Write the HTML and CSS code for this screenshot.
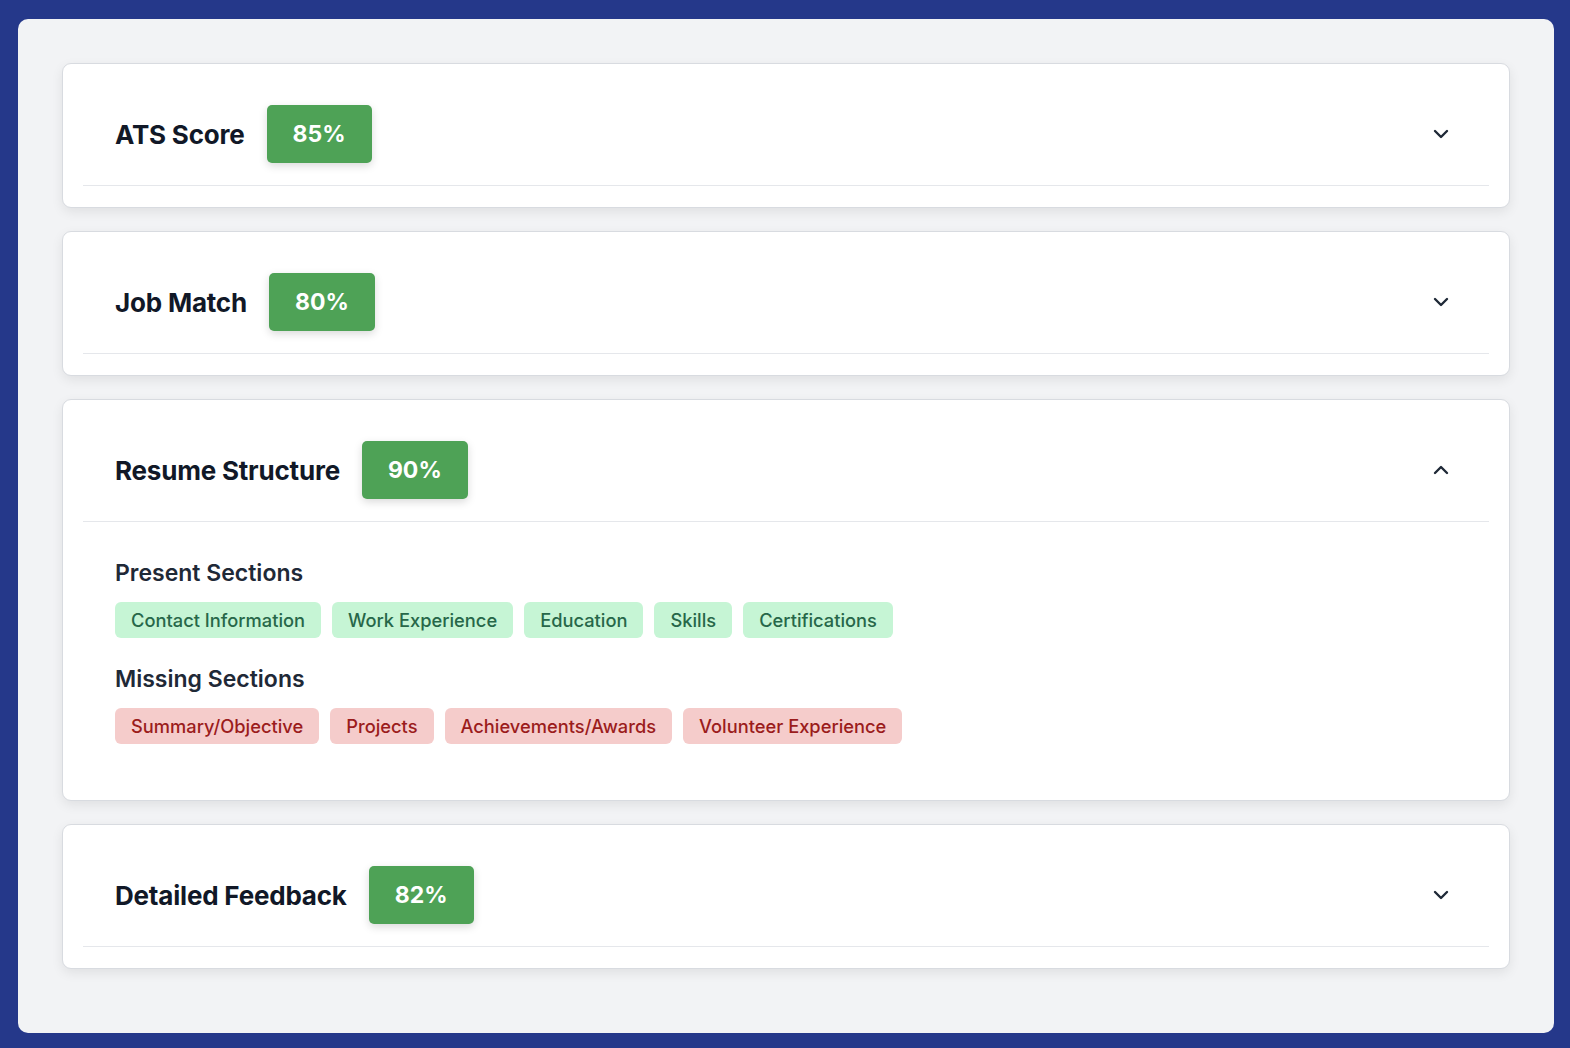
FILE: index.html
```html
<!DOCTYPE html>
<html>
<head>
<meta charset="utf-8">
<link rel="stylesheet" href="styles.css">
</head>
<body>
<div class="panel">
  <div class="card">
    <div class="card-header">
      <div class="title-group">
        <h2 class="title">ATS Score</h2>
        <span class="badge">85%</span>
      </div>
      <svg class="chev" viewBox="0 0 24 24" width="24" height="24"><path d="M6 9l6 6 6-6" fill="none" stroke="#1f2937" stroke-width="2.4" stroke-linecap="round" stroke-linejoin="round"/></svg>
    </div>
  </div>
  <div class="card">
    <div class="card-header">
      <div class="title-group">
        <h2 class="title">Job Match</h2>
        <span class="badge">80%</span>
      </div>
      <svg class="chev" viewBox="0 0 24 24" width="24" height="24"><path d="M6 9l6 6 6-6" fill="none" stroke="#1f2937" stroke-width="2.4" stroke-linecap="round" stroke-linejoin="round"/></svg>
    </div>
  </div>
  <div class="card">
    <div class="card-header">
      <div class="title-group">
        <h2 class="title">Resume Structure</h2>
        <span class="badge">90%</span>
      </div>
      <svg class="chev" viewBox="0 0 24 24" width="24" height="24"><path d="M6 15l6-6 6 6" fill="none" stroke="#1f2937" stroke-width="2.4" stroke-linecap="round" stroke-linejoin="round"/></svg>
    </div>
    <div class="card-body">
      <h3 class="sub">Present Sections</h3>
      <div class="tags">
        <span class="tag tag-ok">Contact Information</span>
        <span class="tag tag-ok">Work Experience</span>
        <span class="tag tag-ok">Education</span>
        <span class="tag tag-ok">Skills</span>
        <span class="tag tag-ok">Certifications</span>
      </div>
      <h3 class="sub">Missing Sections</h3>
      <div class="tags">
        <span class="tag tag-miss">Summary/Objective</span>
        <span class="tag tag-miss">Projects</span>
        <span class="tag tag-miss">Achievements/Awards</span>
        <span class="tag tag-miss">Volunteer Experience</span>
      </div>
    </div>
  </div>
  <div class="card">
    <div class="card-header">
      <div class="title-group">
        <h2 class="title">Detailed Feedback</h2>
        <span class="badge">82%</span>
      </div>
      <svg class="chev" viewBox="0 0 24 24" width="24" height="24"><path d="M6 9l6 6 6-6" fill="none" stroke="#1f2937" stroke-width="2.4" stroke-linecap="round" stroke-linejoin="round"/></svg>
    </div>
  </div>
</div>
</body>
</html>
```

FILE: styles.css
```css
html, body {
  margin: 0;
  padding: 0;
}
body {
  background: #25388a;
  font-family: Inter, "Noto Sans", sans-serif;
  padding: 19px 16px 16px 18px;
  min-height: 1048px;
  box-sizing: border-box;
}
.panel {
  background: #f2f3f5;
  border-radius: 10px;
  padding: 44px 44px 64px 44px;
  display: flex;
  flex-direction: column;
  gap: 23px;
}
.card {
  background: #ffffff;
  border: 1px solid #d8dbe0;
  border-radius: 9px;
  box-shadow: 0 4px 12px rgba(0, 0, 0, 0.08);
  padding: 20px 20px 21px 20px;
}
.card-header {
  display: flex;
  align-items: center;
  justify-content: space-between;
  padding: 21px 36px 22px 32px;
  border-bottom: 1px solid #e5e7eb;
}
.title-group {
  display: flex;
  align-items: center;
  gap: 22px;
}
.title {
  margin: 0;
  font-size: 26px;
  font-weight: 700;
  color: #111827;
  letter-spacing: -0.2px;
}
.badge {
  display: inline-flex;
  align-items: center;
  justify-content: center;
  height: 58px;
  padding: 0 26px;
  background: #4ea256;
  color: #ffffff;
  font-size: 23px;
  font-weight: 700;
  border-radius: 5px;
  box-shadow: 0 3px 8px rgba(0, 0, 0, 0.15);
  box-sizing: border-box;
}
.chev {
  display: block;
}
.card-body {
  padding: 35px 32px 35px 32px;
}
.sub {
  margin: 0 0 12px 0;
  font-size: 23px;
  font-weight: 600;
  color: #1f2937;
  line-height: 33px;
}
.tags {
  display: flex;
  flex-wrap: wrap;
  gap: 11px;
  margin-bottom: 25px;
}
.tags:last-child {
  margin-bottom: 0;
}
.tag {
  display: inline-flex;
  align-items: center;
  height: 36px;
  padding: 0 16px;
  border-radius: 6px;
  font-size: 18.3px;
  font-weight: 500;
}
.tag-ok {
  background: #c6f5d5;
  color: #276749;
}
.tag-miss {
  background: #f5cccb;
  color: #9b1c1c;
}
```
